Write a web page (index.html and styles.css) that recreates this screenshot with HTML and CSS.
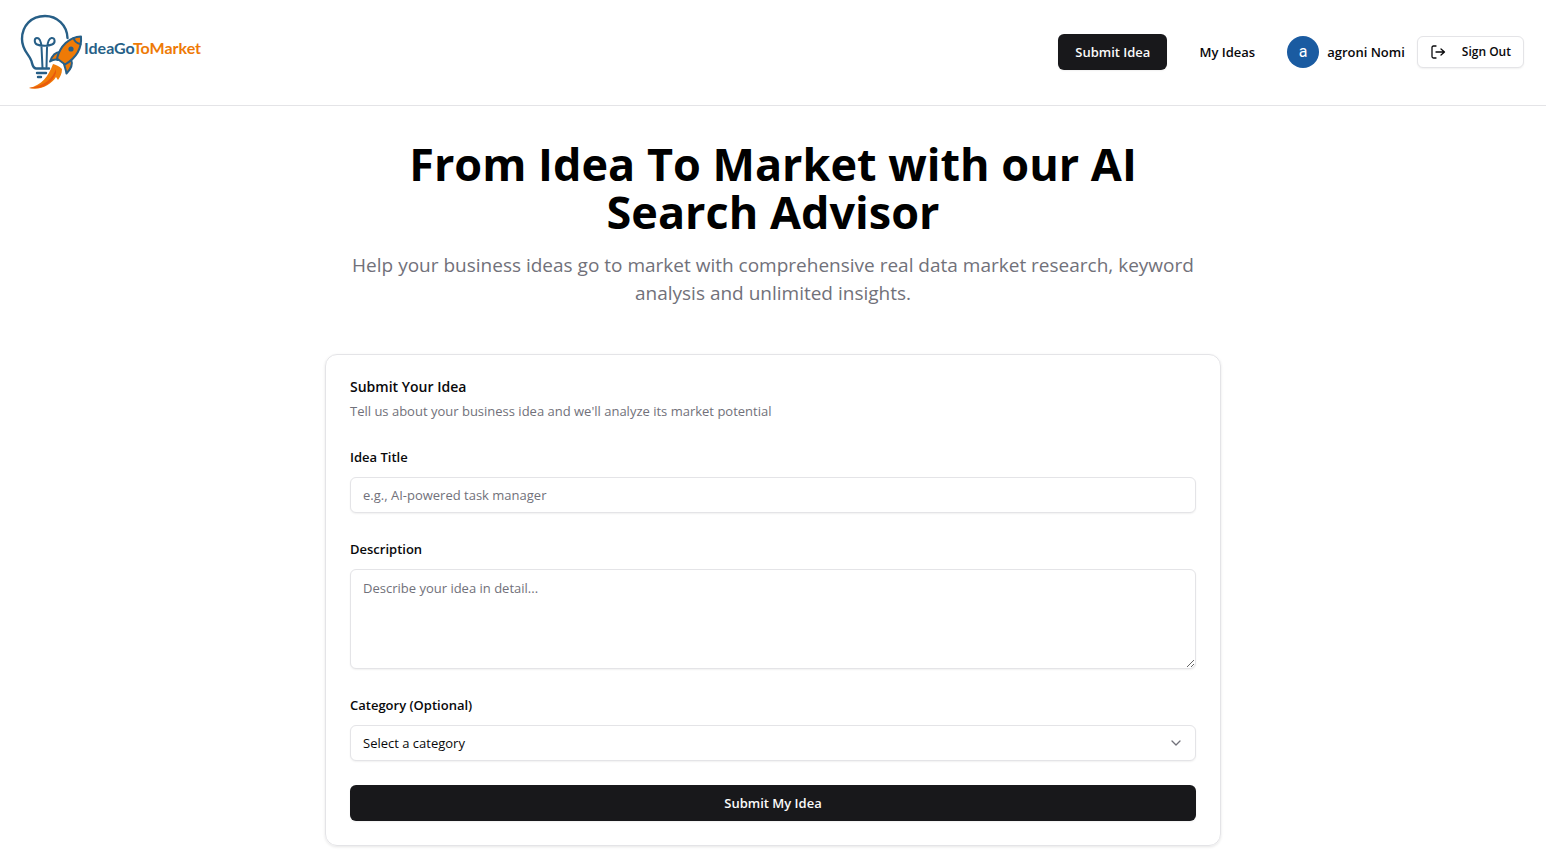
FILE: index.html
```html
<!DOCTYPE html>
<html lang="en">
<head>
    <meta charset="UTF-8">
    <meta name="viewport" content="width=device-width, initial-scale=1.0">
    <title>IdeaGoToMarket</title>
    <link rel="stylesheet" href="styles.css">
</head>
<body>

<!-- Header with logo and navigation -->
<header class="site-header">
    <a class="logo" href="#" aria-label="IdeaGoToMarket home">
        <svg width="184" height="80" viewBox="0 0 184 80" fill="none" stroke-linecap="round" stroke-linejoin="round">
            <!-- Bulb -->
            <g stroke="#275f87" stroke-width="2.4">
                <path d="M47.5 26C47 13 37 4 25 4C11 4 2 14 2 27C2 38 8 41 11 48C12.5 51 12 56 16 56.5H29"/>
                <path d="M17 61H26M18 65H21"/>
                <path stroke-width="2" d="M22.5 56L21.5 35C21 29 19 26 17 26C14 26 14 31 17 32.5C20 34 29 34 32 32.5C36 31 35 25.5 31.5 26C28.5 26.5 27.5 31 27 36L26.5 55"/>
            </g>
            <!-- Rocket -->
            <g stroke="#275f87" stroke-width="2" fill="#ee7a06">
                <path d="M40 40C35 40 32 44 30 49.5C33 47.5 36 47 38 48Z"/>
                <path d="M51 47C53 52 51 57 46.5 61.5C46 58 45 56 44 52Z"/>
                <path d="M61 24.5C49 25 40 34 37 46.5L45 52.5C56 46 62 37 61 24.5Z"/>
                <path d="M53.5 26C54.5 29 57 31.5 60.5 32" fill="none"/>
            </g>
            <circle cx="51" cy="37" r="2.6" fill="#275f87"/>
            <!-- Flame -->
            <path d="M33 52C36 53 39 54 42 57C42 62 40 65 38 68L36 65C31 73 20 79 9 76C22 73 28 65 33 52Z" fill="#f07d0a"/>
            <path d="M36 57C33 66 25 74 9 76C23 78 32 71 36 61Z" fill="#e95a0c"/>
            <text class="logo-text" x="64" y="42"><tspan class="logo-blue">IdeaGo</tspan><tspan class="logo-orange">ToMarket</tspan></text>
        </svg>
    </a>

    <nav class="main-nav">
        <button class="btn btn-dark" type="button">Submit Idea</button>
        <a class="nav-link" href="#">My Ideas</a>
        <div class="user">
            <span class="avatar">a</span>
            <span class="user-name">agroni Nomi</span>
            <button class="btn btn-outline" type="button">
                <svg width="16" height="16" viewBox="0 0 16 16" fill="none" stroke="currentColor" stroke-width="1.3" stroke-linecap="round" stroke-linejoin="round">
                    <path d="M6 2H3.5C2.5 2 2 2.5 2 3.5V12.5C2 13.5 2.5 14 3.5 14H6M6 8H14.5M11 5L14.5 8L11 11"/>
                </svg>
                Sign Out
            </button>
        </div>
    </nav>
</header>

<main class="container">
    <section class="hero">
        <h1>From Idea To Market with our AI Search Advisor</h1>
        <p>Help your business ideas go to market with comprehensive real data market research, keyword analysis and unlimited insights.</p>
    </section>

    <!-- Idea form -->
    <section class="card">
        <h2>Submit Your Idea</h2>
        <p class="card-description">Tell us about your business idea and we'll analyze its market potential</p>

        <form class="idea-form">
            <div class="field">
                <label for="title">Idea Title</label>
                <input id="title" class="control" type="text" placeholder="e.g., AI-powered task manager">
            </div>
            <div class="field">
                <label for="description">Description</label>
                <textarea id="description" class="control" placeholder="Describe your idea in detail..."></textarea>
            </div>
            <div class="field">
                <label for="category">Category (Optional)</label>
                <div class="select-wrap">
                    <select id="category" class="control">
                        <option>Select a category</option>
                    </select>
                    <svg class="chevron" width="16" height="16" viewBox="0 0 16 16" fill="none" stroke="currentColor" stroke-width="1.3" stroke-linecap="round" stroke-linejoin="round">
                        <path d="M4 6L8 10L12 6"/>
                    </svg>
                </div>
            </div>
            <button class="btn btn-dark" type="submit">Submit My Idea</button>
        </form>
    </section>
</main>

</body>
</html>
```
FILE: styles.css
```css
:root {
    --dark: #18181b;
    --text: #09090b;
    --muted: #71717a;
    --border: #e4e4e7;
    --shadow: 0 1px 2px rgba(0, 0, 0, 0.06);
}

* {
    box-sizing: border-box;
    margin: 0;
    padding: 0;
}

body {
    font-family: 'Segoe UI', 'Open Sans', 'Noto Sans', sans-serif;
    font-size: 13px;
    line-height: 20px;
    color: var(--text);
    background: #fff;
}

button, input, textarea, select {
    font: inherit;
    color: inherit;
}

/* Header */
.site-header {
    display: flex;
    justify-content: space-between;
    align-items: center;
    padding: 12px 22px 13px 20px;
    border-bottom: 1px solid var(--border);
}

.logo svg {
    display: block;
}

.logo-text {
    font-family: Lato, sans-serif;
    font-size: 16px;
    font-weight: 700;
}

.logo-blue {
    fill: #275f87;
}

.logo-orange {
    fill: #ee7a06;
}

.main-nav {
    display: flex;
    align-items: center;
    gap: 32px;
}

.nav-link {
    font-weight: 600;
    color: var(--text);
    text-decoration: none;
}

.user {
    display: flex;
    align-items: center;
}

.avatar {
    display: flex;
    align-items: center;
    justify-content: center;
    width: 32px;
    height: 32px;
    margin-right: 8px;
    border-radius: 50%;
    background: #1a5ba1;
    color: #fff;
    font-family: Roboto, sans-serif;
    font-size: 16px;
}

.user-name {
    margin-right: 12px;
    font-weight: 600;
}

/* Buttons */
.btn {
    display: inline-flex;
    align-items: center;
    justify-content: center;
    height: 36px;
    padding: 0 17px;
    border: none;
    border-radius: 6px;
    font-weight: 600;
    box-shadow: var(--shadow);
    cursor: pointer;
}

.btn-dark {
    background: var(--dark);
    color: #fafafa;
}

.btn-outline {
    gap: 16px;
    height: 32px;
    padding: 0 12px;
    border: 1px solid var(--border);
    background: #fff;
    font-size: 12px;
}

/* Hero */
.container {
    max-width: 896px;
    margin: 0 auto;
    padding: 34px 0 11px;
}

.hero {
    margin-bottom: 47px;
    padding: 0 16px;
    text-align: center;
}

.hero h1 {
    margin-bottom: 15px;
    font-size: 45px;
    font-weight: 700;
    line-height: 48px;
    color: #000;
}

.hero p {
    font-size: 19px;
    line-height: 28px;
    color: var(--muted);
}

/* Form card */
.card {
    padding: 24px;
    border: 1px solid var(--border);
    border-radius: 12px;
    box-shadow: 0 1px 3px rgba(0, 0, 0, 0.1);
}

.card h2 {
    margin-bottom: 6px;
    font-size: 14px;
    font-weight: 600;
    line-height: 16px;
}

.card-description {
    margin-bottom: 24px;
    color: var(--muted);
}

.idea-form {
    display: flex;
    flex-direction: column;
    gap: 24px;
}

.field {
    display: flex;
    flex-direction: column;
    gap: 8px;
}

.field label {
    font-weight: 600;
    line-height: 24px;
}

.control {
    display: block;
    width: 100%;
    height: 36px;
    padding: 0 12px;
    border: 1px solid var(--border);
    border-radius: 6px;
    background: #fff;
    box-shadow: var(--shadow);
}

.control::placeholder {
    color: var(--muted);
}

textarea.control {
    height: 100px;
    padding: 8px 12px;
    resize: vertical;
}

.select-wrap {
    position: relative;
}

select.control {
    appearance: none;
}

.chevron {
    position: absolute;
    top: 10px;
    right: 12px;
    color: var(--muted);
    pointer-events: none;
}
```
